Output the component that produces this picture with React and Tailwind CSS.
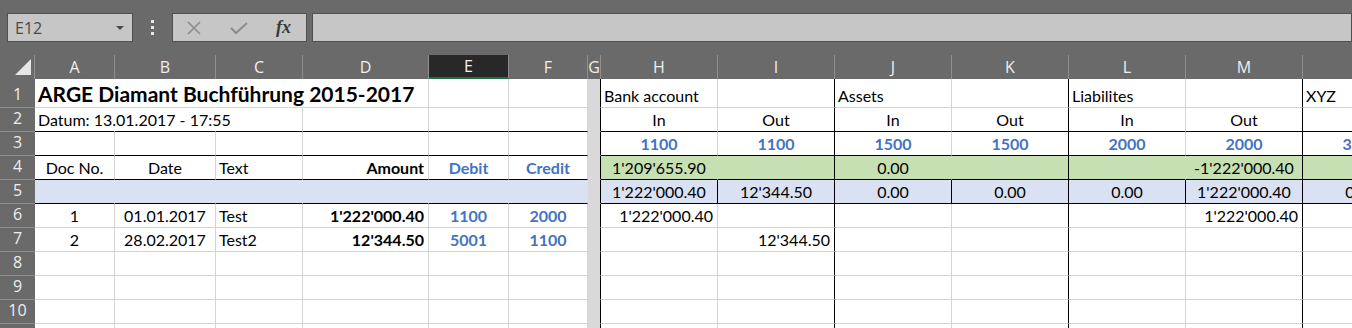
import React from "react";

// Spaltenbreiten A..N
const colW = [
  "w-[80px]",
  "w-[101px]",
  "w-[87px]",
  "w-[126px]",
  "w-[80px]",
  "w-[79px]",
  "w-[13px]",
  "w-[117px]",
  "w-[117px]",
  "w-[117px]",
  "w-[117px]",
  "w-[117px]",
  "w-[117px]",
  "w-[117px]",
];
const letters = ["A", "B", "C", "D", "E", "F", "G", "H", "I", "J", "K", "L", "M", "N"];

const RB = { g: "border-r-[#d4d4d4]", k: "border-r-black", n: "border-r-transparent" };
const BB = { g: "border-b-[#d4d4d4]", k: "border-b-black", n: "border-b-transparent" };
const BG = { w: "", gr: "bg-[#c6e0b4]", bl: "bg-[#d9e1f2]", gy: "bg-[#d9d9d9]" };
const AL = { l: "justify-start pl-[3px]", c: "justify-center", r: "justify-end pr-[4px]" };
const TX = {
  n: "text-black text-[16px]",
  b: "font-bold text-black text-[16px]",
  u: "font-bold text-[#4472c4] text-[16px]",
  t: "font-bold text-black text-[21px]",
};

const G = { bg: "gy", r: "k", b: "n" };

// kurze Helfer
const blank = (o = {}) => ({ ...o });
const rightSide = (vals, extra = {}) =>
  vals.map((v, i) => ({ r: i % 2 === 1 && i < 6 ? "k" : "g", ...extra, ...(v || {}) }));

const rows = [
  {
    n: 1,
    h: "h-[29px]",
    cells: [
      { t: "ARGE Diamant Buchführung 2015-2017", s: "t", r: "n" },
      { r: "n" },
      { r: "n" },
      {},
      {},
      {},
      G,
      ...rightSide([{ t: "Bank account" }, {}, { t: "Assets" }, {}, { t: "Liabilites" }, {}, { t: "XYZ" }]),
    ],
  },
  {
    n: 2,
    cells: [
      { t: "Datum: 13.01.2017 - 17:55", r: "n", b: "k" },
      { r: "n", b: "k" },
      { b: "k" },
      { b: "k" },
      { b: "k" },
      { b: "k" },
      G,
      ...rightSide(
        [{ t: "In", a: "c" }, { t: "Out", a: "c" }, { t: "In", a: "c" }, { t: "Out", a: "c" }, { t: "In", a: "c" }, { t: "Out", a: "c" }, {}],
        { b: "k" }
      ),
    ],
  },
  {
    n: 3,
    cells: [
      { b: "k" },
      { b: "k" },
      { b: "k" },
      { b: "k" },
      { b: "k" },
      { b: "k" },
      G,
      ...rightSide(
        ["1100", "1100", "1500", "1500", "2000", "2000", "3000"].map((t) => ({ t, a: "c", s: "u" })),
        { b: "k" }
      ),
    ],
  },
  {
    n: 4,
    cells: [
      { t: "Doc No.", a: "c", b: "k" },
      { t: "Date", a: "c", b: "k" },
      { t: "Text", b: "k" },
      { t: "Amount", a: "r", s: "b", b: "k" },
      { t: "Debit", a: "c", s: "u", b: "k" },
      { t: "Credit", a: "c", s: "u", b: "k" },
      G,
      { t: "1'209'655.90", a: "c", bg: "gr", r: "n", b: "k" },
      { bg: "gr", r: "k", b: "k" },
      { t: "0.00", a: "c", bg: "gr", r: "n", b: "k" },
      { bg: "gr", r: "k", b: "k" },
      { bg: "gr", r: "n", b: "k" },
      { t: "-1'222'000.40", a: "c", bg: "gr", r: "k", b: "k" },
      { bg: "gr", r: "k", b: "k" },
    ],
  },
  {
    n: 5,
    cells: [
      { bg: "bl", r: "n", b: "k" },
      { bg: "bl", r: "n", b: "k" },
      { bg: "bl", r: "n", b: "k" },
      { bg: "bl", r: "n", b: "k" },
      { bg: "bl", r: "n", b: "k" },
      { bg: "bl", r: "n", b: "k" },
      G,
      ...["1'222'000.40", "12'344.50", "0.00", "0.00", "0.00", "1'222'000.40", "0.00"].map((t) => ({
        t,
        a: "c",
        bg: "bl",
        r: "k",
        b: "k",
      })),
    ],
  },
  {
    n: 6,
    cells: [
      { t: "1", a: "c" },
      { t: "01.01.2017", a: "c" },
      { t: "Test" },
      { t: "1'222'000.40", a: "r", s: "b" },
      { t: "1100", a: "c", s: "u" },
      { t: "2000", a: "c", s: "u" },
      G,
      ...rightSide([{ t: "1'222'000.40", a: "r" }, {}, {}, {}, {}, { t: "1'222'000.40", a: "r" }, {}]),
    ],
  },
  {
    n: 7,
    cells: [
      { t: "2", a: "c" },
      { t: "28.02.2017", a: "c" },
      { t: "Test2" },
      { t: "12'344.50", a: "r", s: "b" },
      { t: "5001", a: "c", s: "u" },
      { t: "1100", a: "c", s: "u" },
      G,
      ...rightSide([{}, { t: "12'344.50", a: "r" }, {}, {}, {}, {}, {}]),
    ],
  },
  ...[8, 9, 10, 11].map((n) => ({
    n,
    cells: [blank(), blank(), blank(), blank(), blank(), blank(), G, ...rightSide([{}, {}, {}, {}, {}, {}, {}])],
  })),
];

function Cell({ i, c }) {
  const cls = [
    colW[i],
    "shrink-0 h-full border-r border-b flex items-end pb-[1px] whitespace-nowrap leading-none",
    RB[c.r || "g"],
    BB[c.b || "g"],
    BG[c.bg || "w"],
    AL[c.a || "l"],
    TX[c.s || "n"],
  ].join(" ");
  return (
    <div className={cls}>
      <span className="pb-[2px]">{c.t}</span>
    </div>
  );
}

function TopBar() {
  return (
    <div className="h-[55px] bg-[#6a6a6a] flex items-start pt-[13px] pl-[7px] font-['Open_Sans',sans-serif]">
      <div className="w-[126px] h-[29px] shrink-0 bg-[#c6c6c6] border border-[#505050] flex items-center justify-between pl-[7px] pr-[8px]">
        <span className="text-[16px] text-[#4a4a4a]">E12</span>
        <span className="w-0 h-0 border-l-[4px] border-r-[4px] border-t-[4px] border-l-transparent border-r-transparent border-t-[#4a4a4a]" />
      </div>
      <div className="w-[39px] h-[29px] shrink-0 flex flex-col items-center justify-center gap-[3px]">
        <span className="w-[3px] h-[3px] bg-[#e8e8e8]" />
        <span className="w-[3px] h-[3px] bg-[#e8e8e8]" />
        <span className="w-[3px] h-[3px] bg-[#e8e8e8]" />
      </div>
      <div className="w-[135px] h-[29px] shrink-0 bg-[#c6c6c6] border border-[#505050] flex items-center">
        <svg width="14" height="14" viewBox="0 0 14 14" className="ml-[14px]">
          <path d="M1 1 L13 13 M13 1 L1 13" stroke="#8c8c8c" strokeWidth="1.6" fill="none" />
        </svg>
        <svg width="18" height="14" viewBox="0 0 18 14" className="ml-[29px]">
          <path d="M1 7 L6 12 L17 2" stroke="#8c8c8c" strokeWidth="2" fill="none" />
        </svg>
        <span className="ml-[28px] font-['Liberation_Serif',serif] italic font-bold text-[18px] text-[#3a3a3a]">fx</span>
      </div>
      <div className="ml-[5px] flex-1 h-[29px] bg-[#c6c6c6] border border-[#505050]" />
    </div>
  );
}

function ColumnHeader() {
  return (
    <div className="h-[24px] flex bg-[#6a6a6a] font-['Open_Sans',sans-serif]">
      <div className="w-[35px] shrink-0 h-full relative border-r border-[#8f8f8f]">
        <svg width="18" height="17" viewBox="0 0 18 17" className="absolute right-[2px] bottom-[3px]">
          <polygon points="17,0 17,16 1,16" fill="#e6e6e6" />
        </svg>
      </div>
      {letters.map((l, i) => (
        <div
          key={l}
          className={
            colW[i] +
            " shrink-0 h-full border-r border-[#8f8f8f] flex items-center justify-center text-[16px] " +
            (l === "E"
              ? "bg-[#282828] text-[#f4f4f4] border-b-2 border-b-[#217346]"
              : "text-[#efefef]")
          }
        >
          {l}
        </div>
      ))}
    </div>
  );
}

export default function App() {
  return (
    <div className="w-[1352px] h-[328px] overflow-hidden bg-[#6a6a6a]">
      <TopBar />
      <ColumnHeader />
      <div className="font-[Lato,sans-serif]">
        {rows.map((row) => (
          <div key={row.n} className={"flex " + (row.h || "h-[24px]")}>
            <div className="w-[35px] shrink-0 h-full bg-[#6a6a6a] border-b border-[#8f8f8f] flex items-end justify-center pb-[1px] text-[16px] text-[#eeeeee] font-['Open_Sans',sans-serif]">
              {row.n}
            </div>
            <div className="flex bg-white h-full">
              {row.cells.map((c, i) => (
                <Cell key={i} i={i} c={c} />
              ))}
            </div>
          </div>
        ))}
      </div>
    </div>
  );
}
